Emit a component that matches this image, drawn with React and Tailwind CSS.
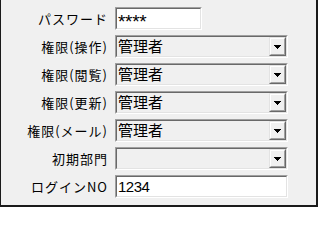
const labelFont = { fontFamily: '"Noto Sans CJK JP", "Noto Sans", sans-serif' };

function Sunken({ width, children, white }) {
  return (
    <div
      className={`h-[23px] border border-t-[#a0a0a0] border-l-[#a0a0a0] border-b-white border-r-white ${width}`}
    >
      <div
        className={`h-full flex items-center border border-t-[#696969] border-l-[#696969] border-b-[#e3e3e3] border-r-[#e3e3e3] ${
          white ? "bg-white" : "bg-[#f0f0f0]"
        }`}
      >
        {children}
      </div>
    </div>
  );
}

function DropButton() {
  return (
    <div className="w-[17px] h-full border border-t-[#e3e3e3] border-l-[#e3e3e3] border-b-[#696969] border-r-[#696969] bg-[#f0f0f0]">
      <div className="w-full h-full flex items-center justify-center border border-t-white border-l-white border-b-[#a0a0a0] border-r-[#a0a0a0]">
        <svg width="7" height="4" viewBox="0 0 7 4" shapeRendering="crispEdges">
          <polygon points="0,0 7,0 3.5,4" fill="#000" />
        </svg>
      </div>
    </div>
  );
}

function Row({ label, children }) {
  return (
    <div className="flex items-center h-[23px]">
      <div
        className="w-[107px] text-right text-[13px] tracking-[1px] text-black leading-none whitespace-nowrap"
        style={labelFont}
      >
        {label}
      </div>
      <div className="ml-[7px]">{children}</div>
    </div>
  );
}

function Combo({ value }) {
  return (
    <Sunken width="w-[173px]">
      <div
        className="flex-1 pl-[1px] pb-[2px] text-[15px] leading-none text-black"
        style={labelFont}
      >
        {value}
      </div>
      <DropButton />
    </Sunken>
  );
}

export default function App() {
  return (
    <div className="w-[318px] h-[207px] bg-[#f0f0f0] border-l border-r-2 border-b-2 border-[#1a1a1a] pt-[7px] flex flex-col gap-[5px]">
      <Row label="パスワード">
        <Sunken width="w-[87px]" white>
          <span
            className="pl-[1px] text-[19px] tracking-[-0.3px] text-black leading-none translate-y-[3px]"
            style={{ fontFamily: '"Liberation Sans", Arial, sans-serif' }}
          >
            ****
          </span>
        </Sunken>
      </Row>
      <Row label="権限(操作)">
        <Combo value="管理者" />
      </Row>
      <Row label="権限(閲覧)">
        <Combo value="管理者" />
      </Row>
      <Row label="権限(更新)">
        <Combo value="管理者" />
      </Row>
      <Row label="権限(メール)">
        <Combo value="管理者" />
      </Row>
      <Row label="初期部門">
        <Combo value="" />
      </Row>
      <Row label="ログインNO">
        <Sunken width="w-[173px]" white>
          <span
            className="pl-[1px] text-[15px] tracking-[-0.5px] text-black leading-none"
            style={{ fontFamily: '"Liberation Sans", Arial, sans-serif' }}
          >
            1234
          </span>
        </Sunken>
      </Row>
    </div>
  );
}
